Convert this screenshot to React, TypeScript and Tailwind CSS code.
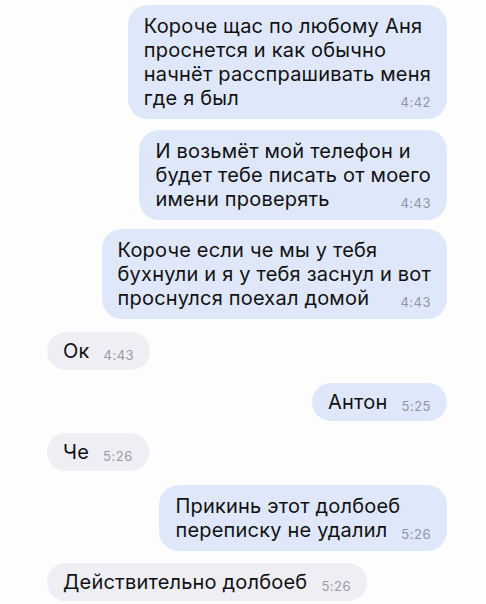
import React from 'react';

type Msg = {
  lines: string[];
  time: string;
  out: boolean;
  mt: string;
};

const messages: Msg[] = [
  {
    lines: ['Короче щас по любому Аня', 'проснется и как обычно', 'начнёт расспрашивать меня', 'где я был'],
    time: '4:42',
    out: true,
    mt: 'mt-[5px]',
  },
  {
    lines: ['И возьмёт мой телефон и', 'будет тебе писать от моего', 'имени проверять'],
    time: '4:43',
    out: true,
    mt: 'mt-[11px]',
  },
  {
    lines: ['Короче если че мы у тебя', 'бухнули и я у тебя заснул и вот', 'проснулся поехал домой'],
    time: '4:43',
    out: true,
    mt: 'mt-[9px]',
  },
  { lines: ['Ок'], time: '4:43', out: false, mt: 'mt-[13px]' },
  { lines: ['Антон'], time: '5:25', out: true, mt: 'mt-[13px]' },
  { lines: ['Че'], time: '5:26', out: false, mt: 'mt-[12px]' },
  {
    lines: ['Прикинь этот долбоеб', 'переписку не удалил'],
    time: '5:26',
    out: true,
    mt: 'mt-[14px]',
  },
  { lines: ['Действительно долбоеб'], time: '5:26', out: false, mt: 'mt-[12px]' },
];

const Bubble: React.FC<{ msg: Msg }> = ({ msg }) => {
  const head = msg.lines.slice(0, -1);
  const last = msg.lines[msg.lines.length - 1];
  const multi = msg.lines.length > 1;
  return (
    <div
      className={`${msg.mt} w-fit rounded-[20px] pl-[16px] pr-[16px] ${
        multi ? 'pt-[9px] pb-[9px]' : 'py-[7px]'
      } ${msg.out ? 'self-end mr-[39px] bg-[#dfe8fa]' : 'self-start ml-[47px] bg-[#efeef4]'}`}
    >
      {head.map((l, i) => (
        <div key={i} className="whitespace-nowrap">
          {l}
        </div>
      ))}
      <div className="flex items-end justify-between whitespace-nowrap">
        <span>{last}</span>
        <span
          className={`ml-[14px] translate-y-[2px] text-[13px] leading-[20px] tracking-[0.5px] ${
            msg.out ? 'text-[#8e96a6]' : 'text-[#9a9aa3]'
          }`}
        >
          {msg.time}
        </span>
      </div>
    </div>
  );
};

export default function App() {
  return (
    <div
      className="w-[486px] h-[604px] overflow-hidden bg-[#fdfdfe] flex flex-col text-[20px] leading-[24px] tracking-[0.2px] text-[#111113]"
      style={{ fontFamily: 'Inter, "Liberation Sans", sans-serif' }}
    >
      {messages.map((m, i) => (
        <Bubble key={i} msg={m} />
      ))}
    </div>
  );
}
